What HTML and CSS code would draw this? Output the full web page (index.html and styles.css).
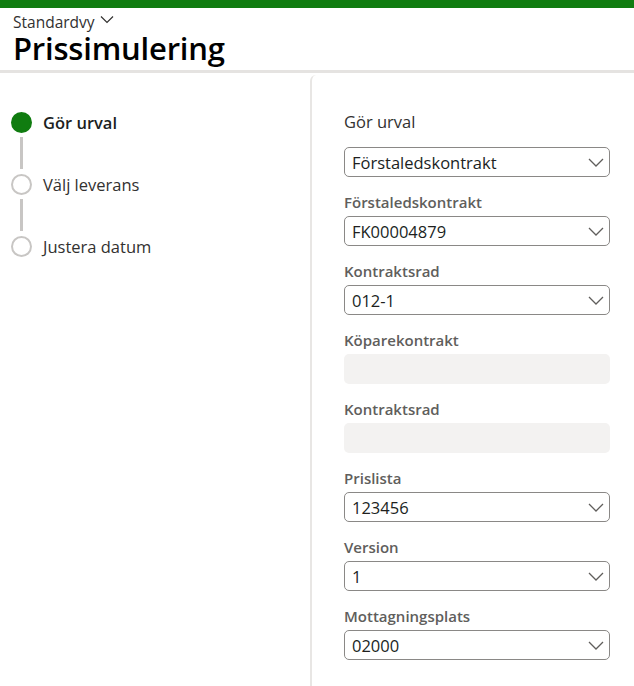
FILE: index.html
```html
<!DOCTYPE html>
<html lang="sv">
<head>
<meta charset="utf-8">
<title>Prissimulering</title>
<link rel="stylesheet" href="styles.css">
</head>
<body>
<div class="topbar"></div>
<header class="header">
  <div class="view">Standardvy <svg class="view-chev" width="14" height="9" viewBox="0 0 14 9"><path d="M1 1.5 L7 7.5 L13 1.5" fill="none" stroke="#323130" stroke-width="1.2"/></svg></div>
  <h1 class="title">Prissimulering</h1>
</header>
<div class="divider"></div>
<main class="main">
  <nav class="steps">
    <div class="step active"><span class="dot"></span><span class="step-label">Gör urval</span></div>
    <div class="connector"></div>
    <div class="step"><span class="dot"></span><span class="step-label">Välj leverans</span></div>
    <div class="connector"></div>
    <div class="step"><span class="dot"></span><span class="step-label">Justera datum</span></div>
  </nav>
  <section class="panel">
    <div class="section-title">Gör urval</div>
    <div class="select first"><span>Förstaledskontrakt</span><svg class="chev" width="16" height="9" viewBox="0 0 16 9"><path d="M1 1 L8 8 L15 1" fill="none" stroke="#605e5c" stroke-width="1.3"/></svg></div>

    <div class="field">
      <div class="label">Förstaledskontrakt</div>
      <div class="select"><span>FK00004879</span><svg class="chev" width="16" height="9" viewBox="0 0 16 9"><path d="M1 1 L8 8 L15 1" fill="none" stroke="#605e5c" stroke-width="1.3"/></svg></div>
    </div>
    <div class="field">
      <div class="label">Kontraktsrad</div>
      <div class="select"><span>012-1</span><svg class="chev" width="16" height="9" viewBox="0 0 16 9"><path d="M1 1 L8 8 L15 1" fill="none" stroke="#605e5c" stroke-width="1.3"/></svg></div>
    </div>
    <div class="field">
      <div class="label">Köparekontrakt</div>
      <div class="input disabled"></div>
    </div>
    <div class="field">
      <div class="label">Kontraktsrad</div>
      <div class="input disabled"></div>
    </div>
    <div class="field">
      <div class="label">Prislista</div>
      <div class="select"><span>123456</span><svg class="chev" width="16" height="9" viewBox="0 0 16 9"><path d="M1 1 L8 8 L15 1" fill="none" stroke="#605e5c" stroke-width="1.3"/></svg></div>
    </div>
    <div class="field">
      <div class="label">Version</div>
      <div class="select"><span>1</span><svg class="chev" width="16" height="9" viewBox="0 0 16 9"><path d="M1 1 L8 8 L15 1" fill="none" stroke="#605e5c" stroke-width="1.3"/></svg></div>
    </div>
    <div class="field">
      <div class="label">Mottagningsplats</div>
      <div class="select"><span>02000</span><svg class="chev" width="16" height="9" viewBox="0 0 16 9"><path d="M1 1 L8 8 L15 1" fill="none" stroke="#605e5c" stroke-width="1.3"/></svg></div>
    </div>
  </section>
</main>
</body>
</html>
```
FILE: styles.css
```css
* { box-sizing: border-box; }
html, body { margin: 0; padding: 0; background: #fff; }
body {
  font-family: "Open Sans", "Noto Sans", sans-serif;
  color: #201f1e;
  width: 634px;
  height: 686px;
  overflow: hidden;
}
.topbar { height: 8px; background: #107c10; }
.header { padding: 5px 0 0 13px; height: 62px; }
.view {
  font-size: 15.5px;
  color: #323130;
  line-height: 18px;
  display: flex;
  align-items: center;
  gap: 5px;
}
.view-chev { margin-top: -5px; }
.title {
  margin: 0;
  font-size: 31px;
  font-weight: 600;
  line-height: 34px;
  color: #000;
  letter-spacing: -0.2px;
}
.divider { height: 3px; background: #e5e3e1; }
.main { display: flex; height: 613px; }
.steps { width: 310px; padding: 38px 0 0 11px; }
.step { display: flex; align-items: center; height: 22px; }
.dot {
  width: 21px; height: 21px;
  border-radius: 50%;
  border: 2px solid #c8c6c4;
  background: #fff;
  flex: none;
}
.step.active .dot { background: #107c10; border-color: #107c10; }
.step-label { margin-left: 11px; font-size: 16.5px; color: #323130; }
.step.active .step-label { font-weight: 600; color: #201f1e; }
.connector { width: 3px; height: 32px; background: #c8c6c4; margin: 4px 0 4px 9px; }
.panel {
  flex: 1;
  border-left: 2px solid #e8e6e4;
  border-top-left-radius: 6px;
  margin-top: 2px;
  padding: 36px 24px 0 32px;
}
.section-title { font-size: 16.5px; color: #323130; line-height: 22px; }
.select {
  height: 30px;
  border: 1px solid #8a8886;
  border-radius: 5px;
  display: flex;
  align-items: center;
  justify-content: space-between;
  padding: 0 5px 0 7px;
  font-size: 16.5px;
  color: #201f1e;
}
.select.first { margin-top: 14px; }
.field { margin-top: 14px; }
.label { font-size: 15px; font-weight: 600; color: #605e5c; line-height: 22px; margin-bottom: 3px; }
.input.disabled { height: 30px; background: #f3f2f1; border-radius: 5px; }
```
